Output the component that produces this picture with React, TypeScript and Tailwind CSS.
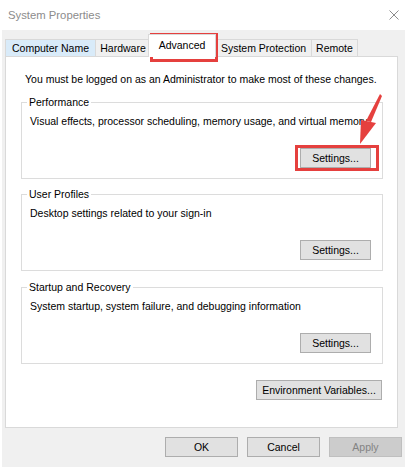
import React from "react";

type BtnProps = {
  label: string;
  className?: string;
  disabled?: boolean;
};

const Button = ({ label, className = "", disabled }: BtnProps) => (
  <button
    className={
      "h-[20px] flex items-center justify-center border " +
      (disabled
        ? "bg-[#cccccc] border-[#bfbfbf] text-[#838383] "
        : "bg-[#e1e1e1] border-[#adadad] text-black ") +
      className
    }
  >
    {label}
  </button>
);

type GroupProps = {
  title: string;
  text: string;
  className?: string;
};

const Group = ({ title, text, className = "" }: GroupProps) => (
  <fieldset className={"border border-[#dcdcdc] pl-[8px] pr-[11px] pb-[10px] " + className}>
    <legend className="-ml-[3px] px-[2px]">{title}</legend>
    <p className="mt-[5px] whitespace-nowrap">{text}</p>
    <div className="mt-[20px] flex justify-end">
      <Button label="Settings..." className="w-[71px]" />
    </div>
  </fieldset>
);

export default function App() {
  return (
    <div className="relative w-[408px] h-[467px] overflow-hidden bg-white text-[10.5px] leading-[14px] text-black font-['Liberation_Sans',Arial,sans-serif]">
      {/* title bar */}
      <header className="h-[30px] flex items-center justify-between pl-[8px] pr-[9px]">
        <span className="text-[11.3px] text-[#8c8c8c]">System Properties</span>
        <svg width="10" height="10" viewBox="0 0 10 10" className="text-[#8c8c8c]">
          <path d="M0.5 0.5 L9.5 9.5 M9.5 0.5 L0.5 9.5" stroke="currentColor" strokeWidth="1" />
        </svg>
      </header>

      {/* dialog body */}
      <div className="ml-[2px] w-[403px] h-[437px] bg-[#f0f0f0] px-[3px] pt-[4px]">
        {/* tabs */}
        <div className="h-[22px] flex items-end">
          <div className="w-[91px] h-[17px] flex items-center justify-center border border-b-0 border-[#d9d9d9] bg-[#d9ebf9]">
            Computer Name
          </div>
          <div className="w-[56px] h-[17px] -ml-px flex items-center justify-center border border-b-0 border-[#d9d9d9]">
            Hardware
          </div>
          <div className="relative z-10 w-[68px] h-[23px] -ml-[3px] -mb-px pb-[2px] flex items-center justify-center border border-b-0 border-[#d9d9d9] bg-white">
            Advanced
          </div>
          <div className="w-[97px] h-[17px] -ml-px flex items-center justify-center border border-b-0 border-[#d9d9d9]">
            System Protection
          </div>
          <div className="w-[47px] h-[17px] -ml-px flex items-center justify-center border border-b-0 border-[#d9d9d9]">
            Remote
          </div>
        </div>

        {/* tab page */}
        <div className="mr-[4px] h-[372px] bg-white border border-[#d9d9d9] pl-[15px] pr-[14px] flex flex-col">
          <p className="mt-[15px] ml-[4px] whitespace-nowrap">
            You must be logged on as an Administrator to make most of these changes.
          </p>
          <Group
            title="Performance"
            text="Visual effects, processor scheduling, memory usage, and virtual memory"
            className="mt-[9px]"
          />
          <Group
            title="User Profiles"
            text="Desktop settings related to your sign-in"
            className="mt-[8px]"
          />
          <Group
            title="Startup and Recovery"
            text="System startup, system failure, and debugging information"
            className="mt-[9px]"
          />
          <div className="mt-[16px] flex justify-end">
            <Button label="Environment Variables..." className="w-[126px] mr-px" />
          </div>
        </div>

        {/* dialog buttons */}
        <div className="mt-[9px] flex justify-end gap-[9px]">
          <Button label="OK" className="w-[73px]" />
          <Button label="Cancel" className="w-[73px]" />
          <Button label="Apply" className="w-[73px]" disabled />
        </div>
      </div>

      {/* red highlight boxes */}
      <div className="absolute left-[150px] top-[33px] w-[68px] h-[29px] border-[3px] border-[#e5403e]" />
      <div className="absolute left-[295px] top-[145px] w-[84px] h-[26px] border-[3px] border-[#e5403e]" />

      {/* red pointer arrow */}
      <svg className="absolute left-[340px] top-[90px]" width="50" height="60" viewBox="0 0 50 60">
        <polygon points="40,4 42,6 31,32 26,31" fill="#e5403e" />
        <polygon points="21,30 36,33 20,54" fill="#e5403e" />
      </svg>
    </div>
  );
}
